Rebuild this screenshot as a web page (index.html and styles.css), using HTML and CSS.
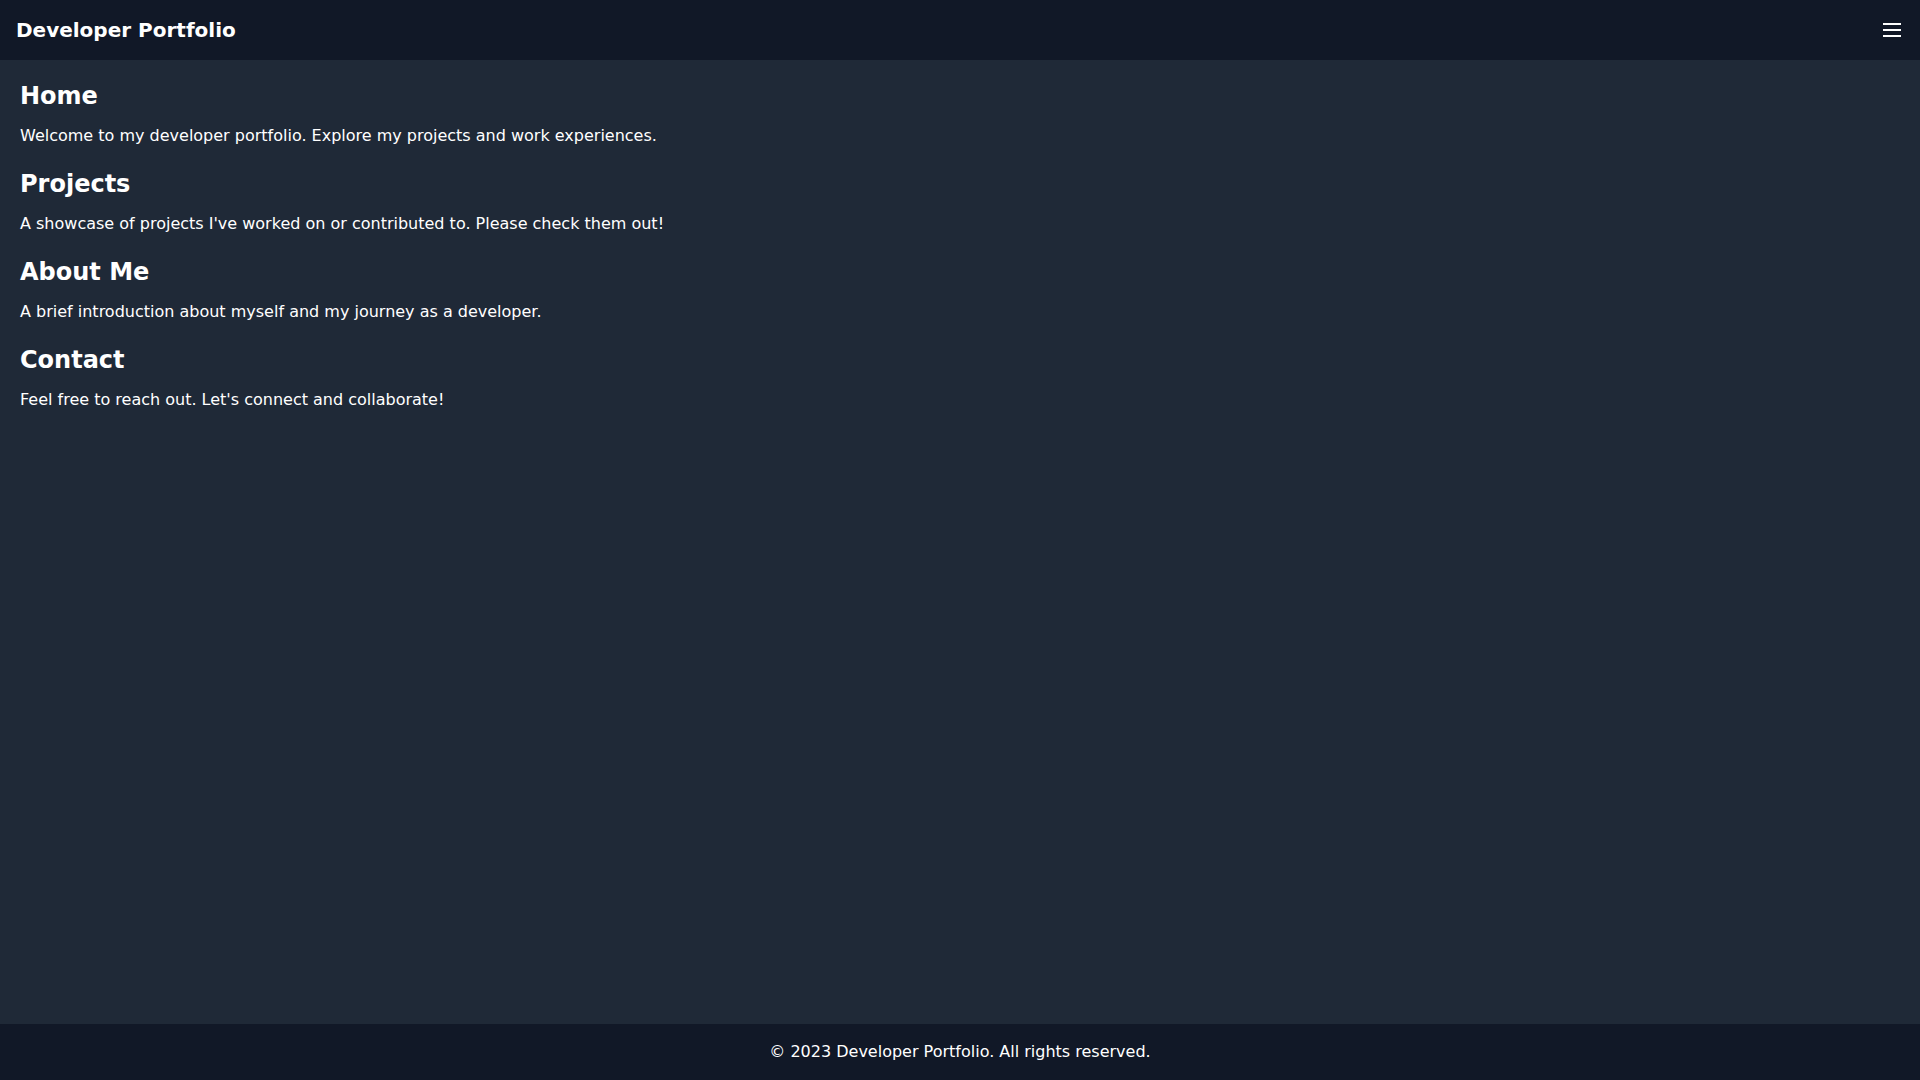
FILE: index.html
```html
<!DOCTYPE html>
<html lang="en">

<head>
    <title>Developer Portfolio</title>
    <link rel="stylesheet" href="styles.css">
</head>

<body>
    <header class="top-bar">
        <span class="brand">Developer Portfolio</span>
        <button class="menu-button" aria-label="Menu">
            <svg width="24" height="24" viewBox="0 0 24 24" fill="none" stroke="currentColor" stroke-width="2"
                stroke-linecap="butt">
                <line x1="3" y1="6" x2="21" y2="6"></line>
                <line x1="3" y1="12" x2="21" y2="12"></line>
                <line x1="3" y1="18" x2="21" y2="18"></line>
            </svg>
        </button>
    </header>

    <main class="content">
        <!-- Sections -->
        <section class="section" id="home">
            <h2>Home</h2>
            <p>Welcome to my developer portfolio. Explore my projects and work experiences.</p>
        </section>
        <section class="section" id="projects">
            <h2>Projects</h2>
            <p>A showcase of projects I've worked on or contributed to. Please check them out!</p>
        </section>
        <section class="section" id="about">
            <h2>About Me</h2>
            <p>A brief introduction about myself and my journey as a developer.</p>
        </section>
        <section class="section" id="contact">
            <h2>Contact</h2>
            <p>Feel free to reach out. Let's connect and collaborate!</p>
        </section>
    </main>

    <footer class="bottom-bar">
        &copy; 2023 Developer Portfolio. All rights reserved.
    </footer>
</body>

</html>
```

FILE: styles.css
```css
body {
    margin: 0;
    min-height: 100vh;
    display: flex;
    flex-direction: column;
    background-color: #1f2937;
    color: #ffffff;
    font-family: "DejaVu Sans", sans-serif;
}

.top-bar {
    display: flex;
    justify-content: space-between;
    align-items: center;
    padding: 16px;
    background-color: #111827;
}

.brand {
    font-size: 20px;
    line-height: 28px;
    font-weight: 700;
}

.menu-button {
    display: flex;
    padding: 0;
    border: none;
    background: none;
    color: #ffffff;
    cursor: pointer;
}

.content {
    flex: 1;
    display: flex;
    flex-direction: column;
    gap: 20px;
    padding: 20px;
}

.section h2 {
    margin: 0 0 12px;
    font-size: 24px;
    line-height: 32px;
    font-weight: 700;
}

.section p {
    margin: 0;
    font-size: 16px;
    line-height: 24px;
}

.bottom-bar {
    padding: 16px;
    text-align: center;
    font-size: 16px;
    line-height: 24px;
    background-color: #111827;
}
```
